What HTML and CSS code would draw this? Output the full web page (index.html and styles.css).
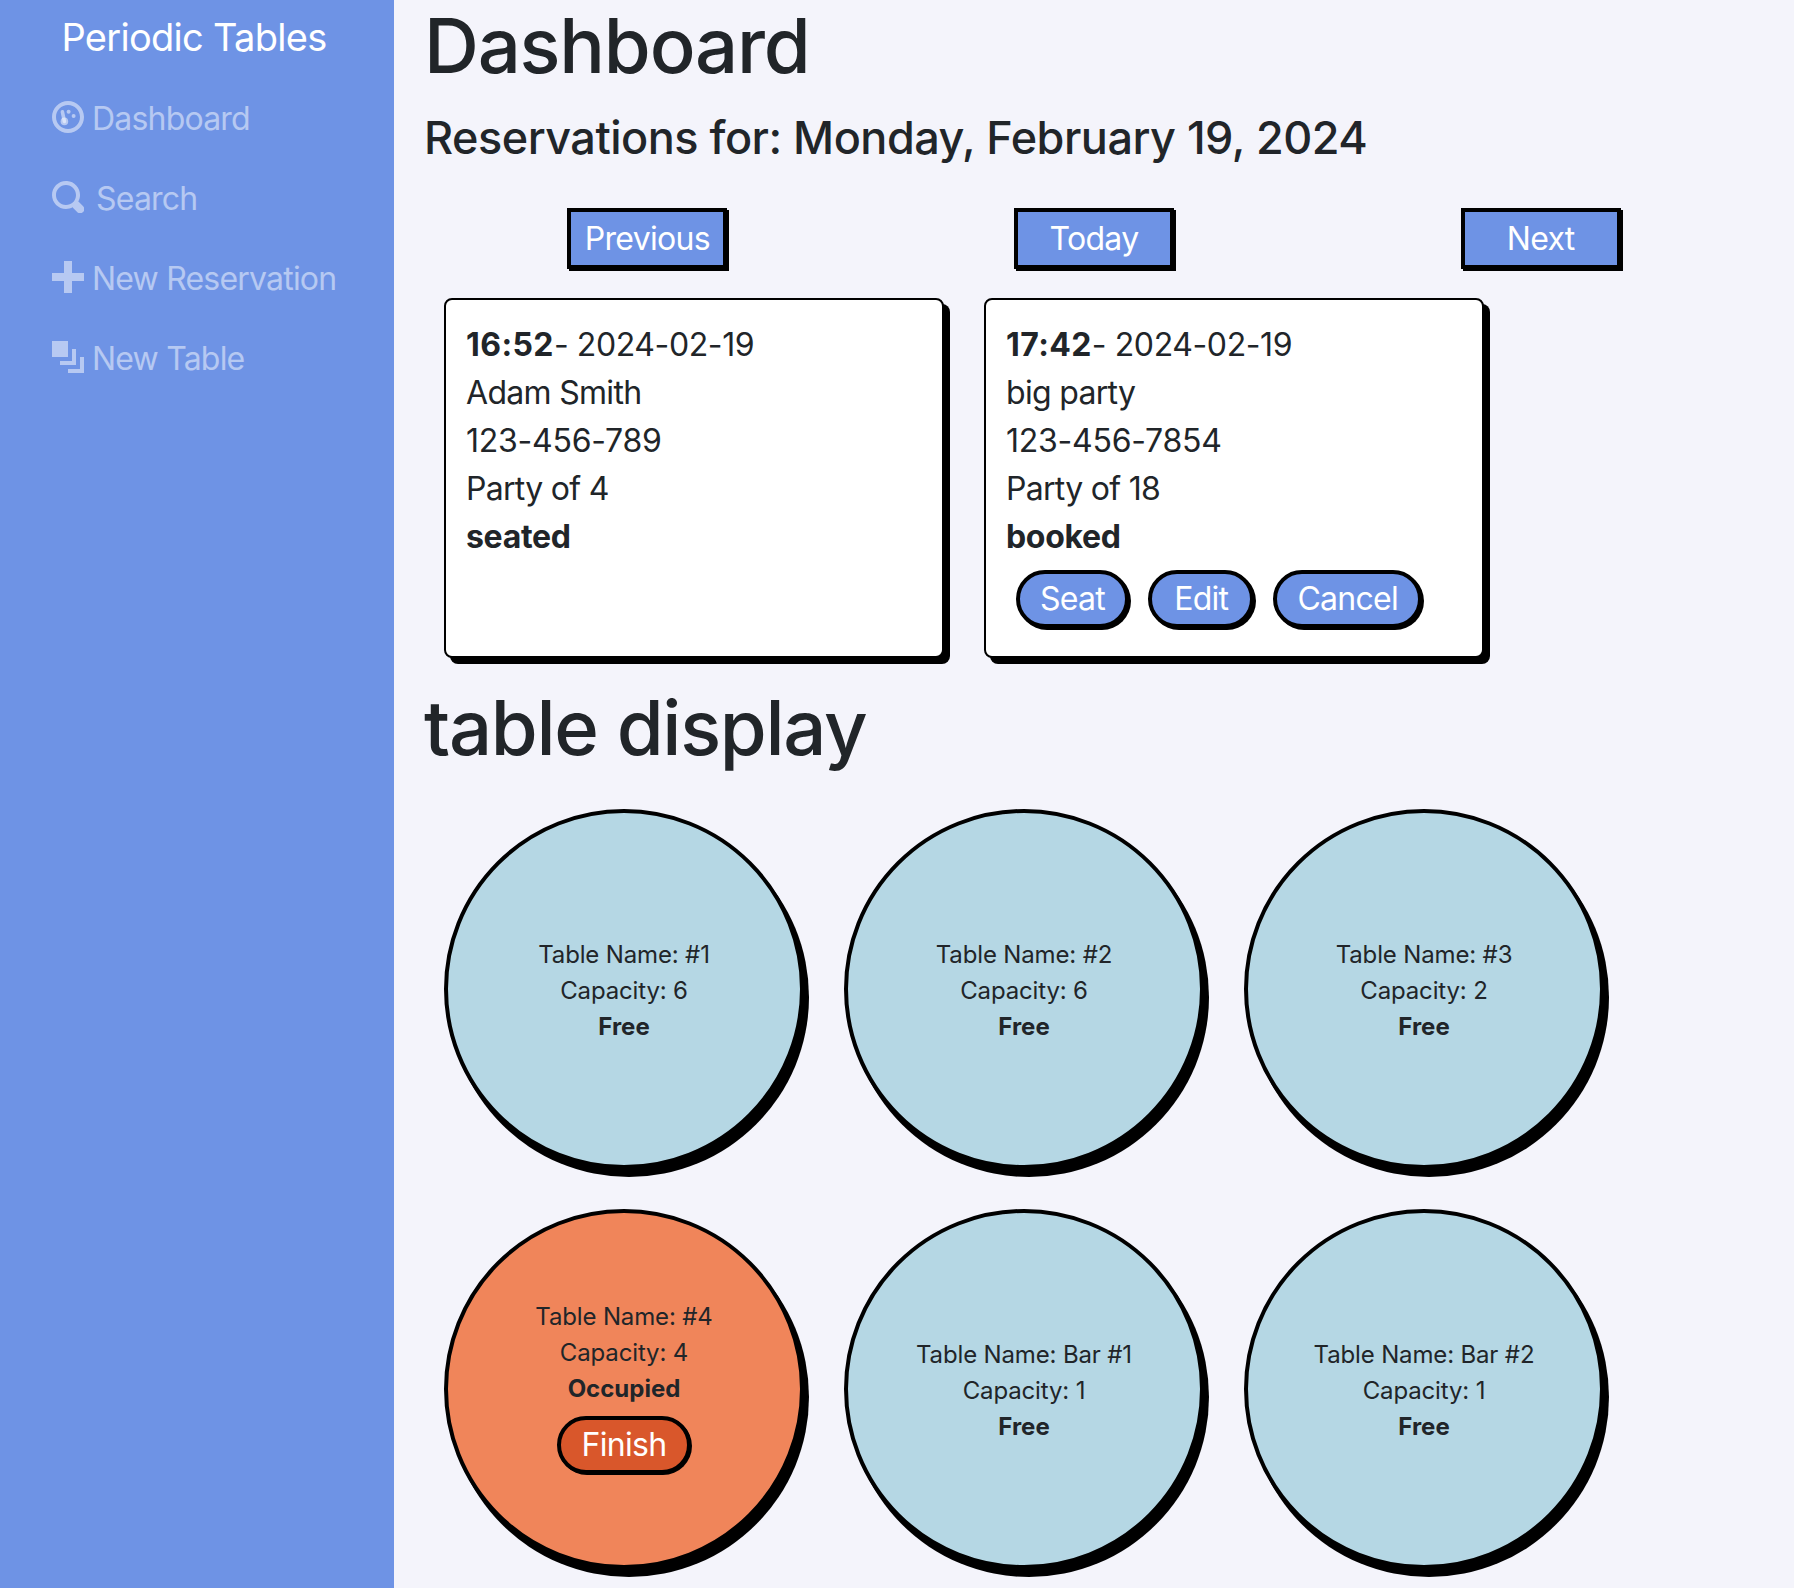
FILE: index.html
```html
<!DOCTYPE html>
<html lang="en">
<head>
  <meta charset="UTF-8">
  <title>Periodic Tables</title>
  <link rel="stylesheet" href="styles.css">
</head>
<body>
  <div class="app">
    <nav class="sidebar">
      <div class="brand">Periodic Tables</div>
      <a class="nav-link" href="#">
        <svg class="oi" viewBox="0 0 8 8">
          <path d="M4 0c-2.2 0-4 1.8-4 4s1.8 4 4 4 4-1.8 4-4-1.8-4-4-4zm0 1c1.66 0 3 1.34 3 3s-1.34 3-3 3-3-1.34-3-3 1.34-3 3-3z"/>
          <circle cx="3.1" cy="5.1" r=".95"/>
          <circle cx="4.15" cy="2.7" r=".5"/>
          <circle cx="5.4" cy="3.75" r=".5"/>
          <path class="oi-needle" d="M3.1 5.1l-.5-2.4"/>
        </svg>
        <span>Dashboard</span>
      </a>
      <a class="nav-link" href="#">
        <svg class="oi" viewBox="0 0 8 8"><path d="M3.5 0c-1.93 0-3.5 1.57-3.5 3.5s1.57 3.5 3.5 3.5c.59 0 1.17-.14 1.66-.41a1 1 0 0 0 .13.13l1 1a1.02 1.02 0 1 0 1.44-1.44l-1-1a1 1 0 0 0-.16-.13c.27-.49.44-1.06.44-1.66 0-1.93-1.57-3.5-3.5-3.5zm0 1c1.39 0 2.5 1.11 2.5 2.5 0 .66-.24 1.27-.66 1.72-.01.01-.02.02-.03.03a1 1 0 0 0-.13.13c-.44.4-1.04.63-1.69.63-1.39 0-2.5-1.11-2.5-2.5s1.11-2.5 2.5-2.5z"/></svg>
        <span class="search-label">Search</span>
      </a>
      <a class="nav-link" href="#">
        <svg class="oi" viewBox="0 0 8 8"><path d="M3 0v3h-3v2h3v3h2v-3h3v-2h-3v-3h-2z"/></svg>
        <span>New Reservation</span>
      </a>
      <a class="nav-link" href="#">
        <svg class="oi" viewBox="0 0 8 8"><path d="M0 0v4h4v-4h-4zm5 2v3h-3v1h4v-4h-1zm2 2v3h-3v1h4v-4h-1z"/></svg>
        <span>New Table</span>
      </a>
    </nav>

    <main class="content">
      <h1>Dashboard</h1>
      <h4>Reservations for: Monday, February 19, 2024</h4>

      <div class="date-nav">
        <div class="date-col"><button class="date-btn">Previous</button></div>
        <div class="date-col"><button class="date-btn">Today</button></div>
        <div class="date-col"><button class="date-btn">Next</button></div>
      </div>

      <div class="cards">
        <div class="card">
          <p class="when"><strong>16:52</strong>- 2024-02-19</p>
          <p>Adam Smith</p>
          <p class="phone">123-456-789</p>
          <p>Party of 4</p>
          <p><strong>seated</strong></p>
        </div>
        <div class="card">
          <p class="when"><strong>17:42</strong>- 2024-02-19</p>
          <p>big party</p>
          <p class="phone">123-456-7854</p>
          <p>Party of 18</p>
          <p><strong>booked</strong></p>
          <div class="card-actions">
            <button class="pill">Seat</button>
            <button class="pill pill-edit">Edit</button>
            <button class="pill">Cancel</button>
          </div>
        </div>
      </div>

      <h1 class="section-title">table display</h1>

      <div class="tables">
        <div class="table-circle">
          <p>Table Name: #1</p>
          <p>Capacity: 6</p>
          <p><strong>Free</strong></p>
        </div>
        <div class="table-circle">
          <p>Table Name: #2</p>
          <p>Capacity: 6</p>
          <p><strong>Free</strong></p>
        </div>
        <div class="table-circle">
          <p>Table Name: #3</p>
          <p>Capacity: 2</p>
          <p><strong>Free</strong></p>
        </div>
        <div class="table-circle occupied">
          <p>Table Name: #4</p>
          <p>Capacity: 4</p>
          <p><strong>Occupied</strong></p>
          <button class="pill finish">Finish</button>
        </div>
        <div class="table-circle">
          <p>Table Name: Bar #1</p>
          <p>Capacity: 1</p>
          <p><strong>Free</strong></p>
        </div>
        <div class="table-circle">
          <p>Table Name: Bar #2</p>
          <p>Capacity: 1</p>
          <p><strong>Free</strong></p>
        </div>
      </div>
    </main>
  </div>
</body>
</html>
```

FILE: styles.css
```css
* {
  box-sizing: border-box;
}

body {
  margin: 0;
  background-color: #f4f4fb;
  font-family: 'Inter', sans-serif;
  font-size: 32px;
  line-height: 48px;
  letter-spacing: -0.7px;
  color: #212529;
}

.app {
  display: flex;
  height: 1588px;
  overflow: hidden;
}

.sidebar {
  width: 394px;
  flex-shrink: 0;
  background-color: #6e93e5;
  padding-left: 52px;
}

.brand {
  width: 284px;
  height: 79px;
  padding-top: 13px;
  font-size: 38px;
  line-height: 48px;
  text-align: center;
  color: #fff;
}

.nav-link {
  display: flex;
  align-items: center;
  height: 80px;
  color: rgba(255, 255, 255, .5);
  text-decoration: none;
  white-space: nowrap;
  letter-spacing: -0.8px;
}

.oi {
  width: 32px;
  height: 32px;
  fill: currentColor;
  margin-right: 8px;
  margin-top: -5px;
}

.oi-needle {
  fill: none;
  stroke: currentColor;
  stroke-width: .9;
  stroke-linecap: round;
}

.search-label {
  margin-left: 4px;
}

.content {
  flex: 1;
  padding: 0 30px;
}

h1 {
  margin: 0;
  font-size: 76px;
  font-weight: 500;
  line-height: 91px;
  letter-spacing: -1.2px;
}

h4 {
  margin: 20px 0 0;
  font-size: 45px;
  font-weight: 500;
  line-height: 54px;
  letter-spacing: -0.5px;
}

.date-nav {
  display: grid;
  grid-template-columns: repeat(3, 1fr);
  margin-top: 43px;
}

.date-col {
  text-align: center;
}

.date-btn {
  width: 160px;
  height: 61px;
  padding: 0;
  border: 4px solid #000;
  border-radius: 0;
  background-color: #6e93e5;
  box-shadow: 2px 2px 0 #000;
  font: inherit;
  letter-spacing: inherit;
  color: #fff;
}

.cards {
  display: flex;
  gap: 40px;
  margin-top: 29px;
  padding-left: 20px;
}

.card {
  width: 500px;
  height: 360px;
  padding: 21px 20px;
  background-color: #fff;
  border: 2px solid #000;
  border-radius: 8px;
  box-shadow: 6px 6px 0 #000;
}

.card p {
  margin: 0;
}

.card strong {
  letter-spacing: -0.3px;
}

.card .when {
  letter-spacing: -0.4px;
}

.card .when strong {
  letter-spacing: 0.4px;
}

.card .phone {
  letter-spacing: -0.25px;
}

.card-actions {
  display: flex;
  gap: 19px;
  margin-top: 9px;
  padding-left: 10px;
}

.pill {
  height: 58px;
  padding: 0 20px;
  border: 4px solid #000;
  border-radius: 29px;
  background-color: #6e93e5;
  box-shadow: 2px 2px 0 #000;
  font: inherit;
  letter-spacing: inherit;
  color: #fff;
}

.pill-edit {
  padding: 0 22px;
}

.section-title {
  margin-top: 24px;
  letter-spacing: -1.3px;
}

.tables {
  display: grid;
  grid-template-columns: repeat(3, 360px);
  gap: 40px;
  margin-top: 36px;
  padding-left: 20px;
}

.table-circle {
  display: flex;
  flex-direction: column;
  align-items: center;
  justify-content: center;
  width: 360px;
  height: 360px;
  padding-top: 4px;
  background-color: #b5d7e4;
  border: 4px solid #000;
  border-radius: 50%;
  box-shadow: 5px 8px 0 #000;
  font-size: 24px;
  line-height: 36px;
  letter-spacing: -0.15px;
}

.table-circle p {
  margin: 0;
}

.table-circle strong {
  letter-spacing: 0;
}

.occupied {
  background-color: #f0855a;
}

.finish {
  height: 58px;
  margin: 9px 0 9px;
  padding: 0 21px;
  background-color: #d9572b;
  box-shadow: 1px 1px 0 #000;
  font-size: 32px;
  line-height: 48px;
  letter-spacing: -0.7px;
}
```
